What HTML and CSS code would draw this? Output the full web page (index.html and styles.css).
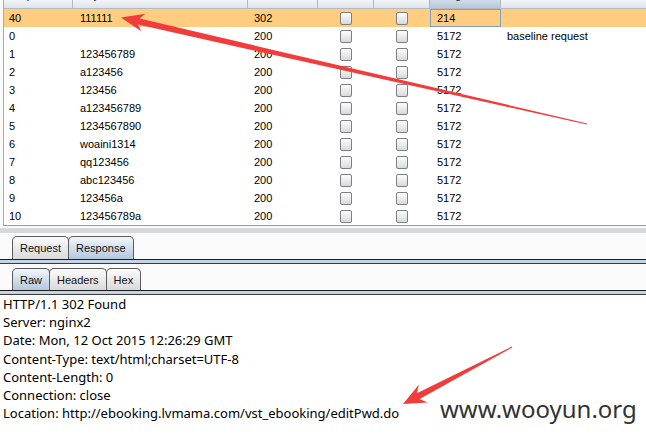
FILE: index.html
```html
<!DOCTYPE html>
<html>
<head>
<meta charset="utf-8">
<link rel="stylesheet" href="styles.css">
</head>
<body>
<div class="page">
  <div class="results">
    <div class="row head">
      <div class="hc first"><span>Request</span></div>
      <div class="hc"><span>Payload</span></div>
      <div class="hc"><span>Status</span></div>
      <div class="hc"><span>Error</span></div>
      <div class="hc"><span>Timeout</span></div>
      <div class="hc sorted"><span>Length</span></div>
      <div class="hc last"><span>Comment</span></div>
    </div>
    <div class="row sel">
      <div class="c first">40</div><div class="c">111111</div><div class="c">302</div>
      <div class="c cb"><i class="box"></i></div><div class="c cb"><i class="box"></i></div>
      <div class="c focus">214</div><div class="c"></div>
    </div>
    <div class="row">
      <div class="c first">0</div><div class="c"></div><div class="c">200</div>
      <div class="c cb"><i class="box"></i></div><div class="c cb"><i class="box"></i></div>
      <div class="c">5172</div><div class="c">baseline request</div>
    </div>
    <div class="row">
      <div class="c first">1</div><div class="c">123456789</div><div class="c">200</div>
      <div class="c cb"><i class="box"></i></div><div class="c cb"><i class="box"></i></div>
      <div class="c">5172</div><div class="c"></div>
    </div>
    <div class="row">
      <div class="c first">2</div><div class="c">a123456</div><div class="c">200</div>
      <div class="c cb"><i class="box"></i></div><div class="c cb"><i class="box"></i></div>
      <div class="c">5172</div><div class="c"></div>
    </div>
    <div class="row">
      <div class="c first">3</div><div class="c">123456</div><div class="c">200</div>
      <div class="c cb"><i class="box"></i></div><div class="c cb"><i class="box"></i></div>
      <div class="c">5172</div><div class="c"></div>
    </div>
    <div class="row">
      <div class="c first">4</div><div class="c">a123456789</div><div class="c">200</div>
      <div class="c cb"><i class="box"></i></div><div class="c cb"><i class="box"></i></div>
      <div class="c">5172</div><div class="c"></div>
    </div>
    <div class="row">
      <div class="c first">5</div><div class="c">1234567890</div><div class="c">200</div>
      <div class="c cb"><i class="box"></i></div><div class="c cb"><i class="box"></i></div>
      <div class="c">5172</div><div class="c"></div>
    </div>
    <div class="row">
      <div class="c first">6</div><div class="c">woaini1314</div><div class="c">200</div>
      <div class="c cb"><i class="box"></i></div><div class="c cb"><i class="box"></i></div>
      <div class="c">5172</div><div class="c"></div>
    </div>
    <div class="row">
      <div class="c first">7</div><div class="c">qq123456</div><div class="c">200</div>
      <div class="c cb"><i class="box"></i></div><div class="c cb"><i class="box"></i></div>
      <div class="c">5172</div><div class="c"></div>
    </div>
    <div class="row">
      <div class="c first">8</div><div class="c">abc123456</div><div class="c">200</div>
      <div class="c cb"><i class="box"></i></div><div class="c cb"><i class="box"></i></div>
      <div class="c">5172</div><div class="c"></div>
    </div>
    <div class="row">
      <div class="c first">9</div><div class="c">123456a</div><div class="c">200</div>
      <div class="c cb"><i class="box"></i></div><div class="c cb"><i class="box"></i></div>
      <div class="c">5172</div><div class="c"></div>
    </div>
    <div class="row">
      <div class="c first">10</div><div class="c">123456789a</div><div class="c">200</div>
      <div class="c cb"><i class="box"></i></div><div class="c cb"><i class="box"></i></div>
      <div class="c">5172</div><div class="c"></div>
    </div>
  </div>

  <div class="divider"></div>

  <div class="tabstrip outer">
    <div class="tab">Request</div>
    <div class="tab active">Response</div>
  </div>
  <div class="band"></div>

  <div class="tabstrip inner">
    <div class="tab active">Raw</div>
    <div class="tab">Headers</div>
    <div class="tab">Hex</div>
  </div>
  <div class="band"></div>

  <div class="message">
    <div>HTTP/1.1 302 Found</div>
    <div>Server: nginx2</div>
    <div>Date: Mon, 12 Oct 2015 12:26:29 GMT</div>
    <div>Content-Type: text/html;charset=UTF-8</div>
    <div>Content-Length: 0</div>
    <div>Connection: close</div>
    <div>Location: http://ebooking.lvmama.com/vst_ebooking/editPwd.do</div>
  </div>

  <div class="watermark">www.wooyun.org</div>

  <svg class="arrows" width="646" height="442" viewBox="0 0 646 442">
    <polygon class="arrow" points="121,17.5 145.5,13.8 139.6,18.6 587.1,123.4 586.9,124.6 138.0,24.6 141.2,31.2"/>
    <polygon class="arrow" points="403,404 418.8,384.8 416.9,393.2 511.8,346.6 512.2,347.4 419.6,399.0 427.6,402.6"/>
  </svg>
</div>
</body>
</html>
```

FILE: styles.css
```css
html, body {
  margin: 0;
  padding: 0;
  background: #ffffff;
}

.page {
  position: relative;
  width: 646px;
  height: 442px;
  overflow: hidden;
  font-family: "Liberation Sans", Arial, sans-serif;
  font-size: 11px;
  color: #000;
  background: #fafafa;
  display: flex;
  flex-direction: column;
}

.results {
  margin-left: 3px;
  border-left: 1px solid #a9a9b0;
  border-bottom: 1px solid #9c9ca8;
  background: #ffffff;
  flex: none;
}

.row {
  display: grid;
  grid-template-columns: 69px 175px 70px 56px 56px 71px 1fr;
  height: 18px;
  line-height: 18px;
}

.row.head {
  height: 8px;
  border-bottom: 1px solid #b4bac4;
  background: linear-gradient(#f2f4f7, #dfe4ea);
}

.hc {
  overflow: hidden;
  border-right: 1px solid #b3b8c1;
  padding-left: 7px;
  white-space: nowrap;
}
.hc.first {
  padding-left: 5px;
}
.hc span {
  display: block;
  line-height: 14px;
  margin-top: -12px;
  color: #222;
}
.hc.sorted {
  background: linear-gradient(#cfdbe8, #b7c9dc);
}
.hc.last {
  border-right: none;
}

.c {
  padding-left: 6px;
  white-space: nowrap;
  overflow: hidden;
}
.c.first {
  padding-left: 5px;
}
.c:nth-child(2) {
  padding-left: 7px;
}
.c:nth-child(6) {
  padding-left: 7px;
}

.row.sel {
  background: #ffcd80;
}
.c.focus {
  border: 1px solid #7d9ec6;
  line-height: 16px;
  padding-left: 6px;
}

.c.cb {
  padding: 0;
  display: flex;
  align-items: center;
  justify-content: center;
}
.box {
  display: block;
  width: 10px;
  height: 11px;
  border: 1px solid #7d7f84;
  border-radius: 2px;
  background: linear-gradient(#fdfdfd, #d8d9dc);
  box-sizing: content-box;
}

.divider {
  flex: none;
  height: 5px;
  margin-top: 2px;
  background: #d6d8dc;
}

.tabstrip {
  flex: none;
  display: flex;
  align-items: flex-end;
  padding-left: 12px;
}
.tabstrip.outer {
  margin-top: 3px;
  height: 23px;
}
.tabstrip.inner {
  margin-top: 4px;
  height: 22px;
}

.tab {
  height: 100%;
  box-sizing: border-box;
  padding: 0 7px;
  border: 1px solid #5c5c5c;
  border-bottom: none;
  border-radius: 5px 5px 0 0;
  background: linear-gradient(#fbfbfb, #dadada);
  line-height: 22px;
  font-size: 11px;
  margin-right: -1px;
  color: #111;
}
.tab.active {
  background: linear-gradient(#f2f6fa, #b3c7dd);
}

.band {
  flex: none;
  height: 3px;
  border-top: 1px solid #1e1e1e;
  border-bottom: 1px solid #3a3a3a;
  background: #c5d4e5;
}

.message {
  flex: 1;
  background: #ffffff;
  padding-left: 3px;
  font-family: "Noto Sans", "Open Sans", sans-serif;
  font-size: 13px;
  line-height: 18.2px;
  color: #000;
}

.watermark {
  position: absolute;
  left: 440px;
  top: 394px;
  font-family: "Noto Sans", sans-serif;
  font-size: 24px;
  line-height: 30px;
  color: #333333;
}

.arrows {
  position: absolute;
  left: 0;
  top: 0;
  pointer-events: none;
}
.arrow {
  fill: #f23b3b;
}
```
